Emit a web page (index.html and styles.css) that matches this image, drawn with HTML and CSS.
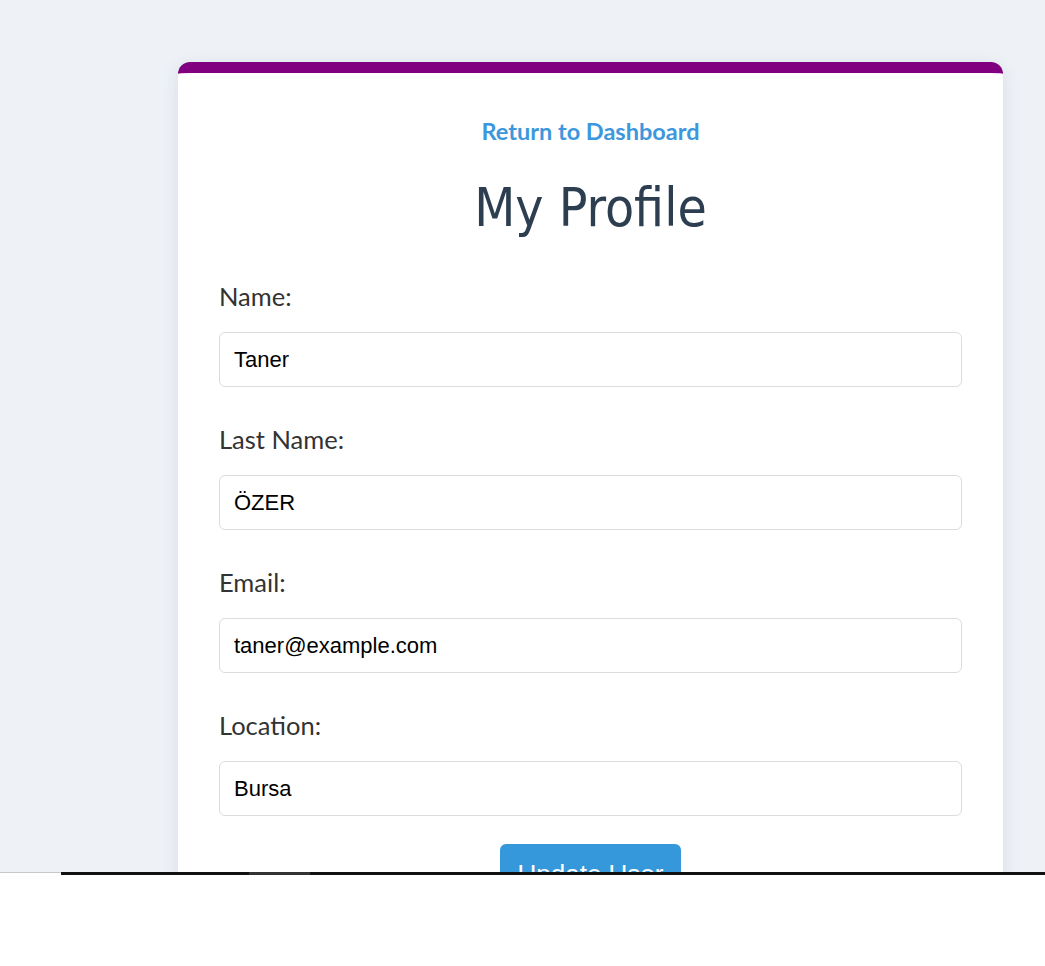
FILE: index.html
```html
<!DOCTYPE html>
<html lang="en">
<head>
<meta charset="utf-8">
<title>My Profile</title>
<link rel="stylesheet" href="styles.css">
</head>
<body>
<div class="page">
  <div class="card">
    <a class="back-link" href="#">Return to Dashboard</a>
    <h1 class="title">My Profile</h1>
    <form class="form">
      <div class="field">
        <label class="label" for="name">Name:</label>
        <input class="input" id="name" type="text" value="Taner">
      </div>
      <div class="field">
        <label class="label" for="lastname">Last Name:</label>
        <input class="input" id="lastname" type="text" value="ÖZER">
      </div>
      <div class="field">
        <label class="label" for="email">Email:</label>
        <input class="input" id="email" type="email" value="taner@example.com">
      </div>
      <div class="field">
        <label class="label" for="location">Location:</label>
        <input class="input" id="location" type="text" value="Bursa">
      </div>
      <div class="actions">
        <button class="btn" type="button">Update User</button>
      </div>
    </form>
  </div>
</div>
<div class="bottom-panel">
  <div class="edge edge-light"></div>
  <div class="edge edge-dark edge-a"></div>
  <div class="edge edge-thumb"></div>
  <div class="edge edge-dark edge-b"></div>
</div>
</body>
</html>
```
FILE: styles.css
```css
html, body {
  margin: 0;
  padding: 0;
}
body {
  background: #eef2f7;
  font-family: "Lato", "Open Sans", sans-serif;
  min-height: 966px;
}
.page {
  padding: 62px 42px 40px 178px;
}
.card {
  width: 825px;
  box-sizing: border-box;
  background: #fff;
  border-top: 11px solid #800080;
  border-radius: 12px;
  box-shadow: 0 4px 18px rgba(30, 45, 70, 0.10);
  padding: 46px 41px 40px;
  display: flex;
  flex-direction: column;
}
.back-link {
  align-self: center;
  color: #3d97dc;
  font-weight: 700;
  font-size: 23.5px;
  line-height: 25px;
  text-decoration: none;
}
.title {
  margin: 32px 0 0;
  text-align: center;
  font-family: "DejaVu Sans Condensed", "DejaVu Sans", sans-serif;
  font-stretch: condensed;
  font-weight: 400;
  font-size: 53px;
  line-height: 64px;
  color: #2c3e50;
}
.form {
  margin-top: 42px;
  display: flex;
  flex-direction: column;
}
.field {
  display: flex;
  flex-direction: column;
  margin-bottom: 38px;
}
.label {
  font-size: 25.5px;
  line-height: 28px;
  color: #333;
  margin-bottom: 22px;
}
.input {
  height: 55px;
  box-sizing: border-box;
  border: 1px solid #dcdcdc;
  border-radius: 6px;
  padding: 0 14px;
  font-family: "Liberation Sans", Arial, sans-serif;
  font-size: 22px;
  color: #000;
  background: #fff;
  outline: none;
}
.actions {
  display: flex;
  justify-content: center;
  margin-top: -10px;
}
.btn {
  width: 181px;
  height: 60px;
  border: none;
  border-radius: 6px;
  background: #3498db;
  color: #fff;
  font-family: "Liberation Sans", Arial, sans-serif;
  font-size: 26px;
  padding: 0;
}
.bottom-panel {
  position: fixed;
  left: 0;
  right: 0;
  top: 872px;
  bottom: 0;
  background: #fff;
  display: flex;
  align-items: flex-start;
}
.edge {
  height: 3px;
}
.edge-light {
  width: 61px;
  height: 1px;
  background: #c8c8c8;
}
.edge-dark {
  background: #111;
}
.edge-a {
  width: 188px;
}
.edge-thumb {
  width: 61px;
  background: #333;
}
.edge-b {
  flex: 1;
}
```
